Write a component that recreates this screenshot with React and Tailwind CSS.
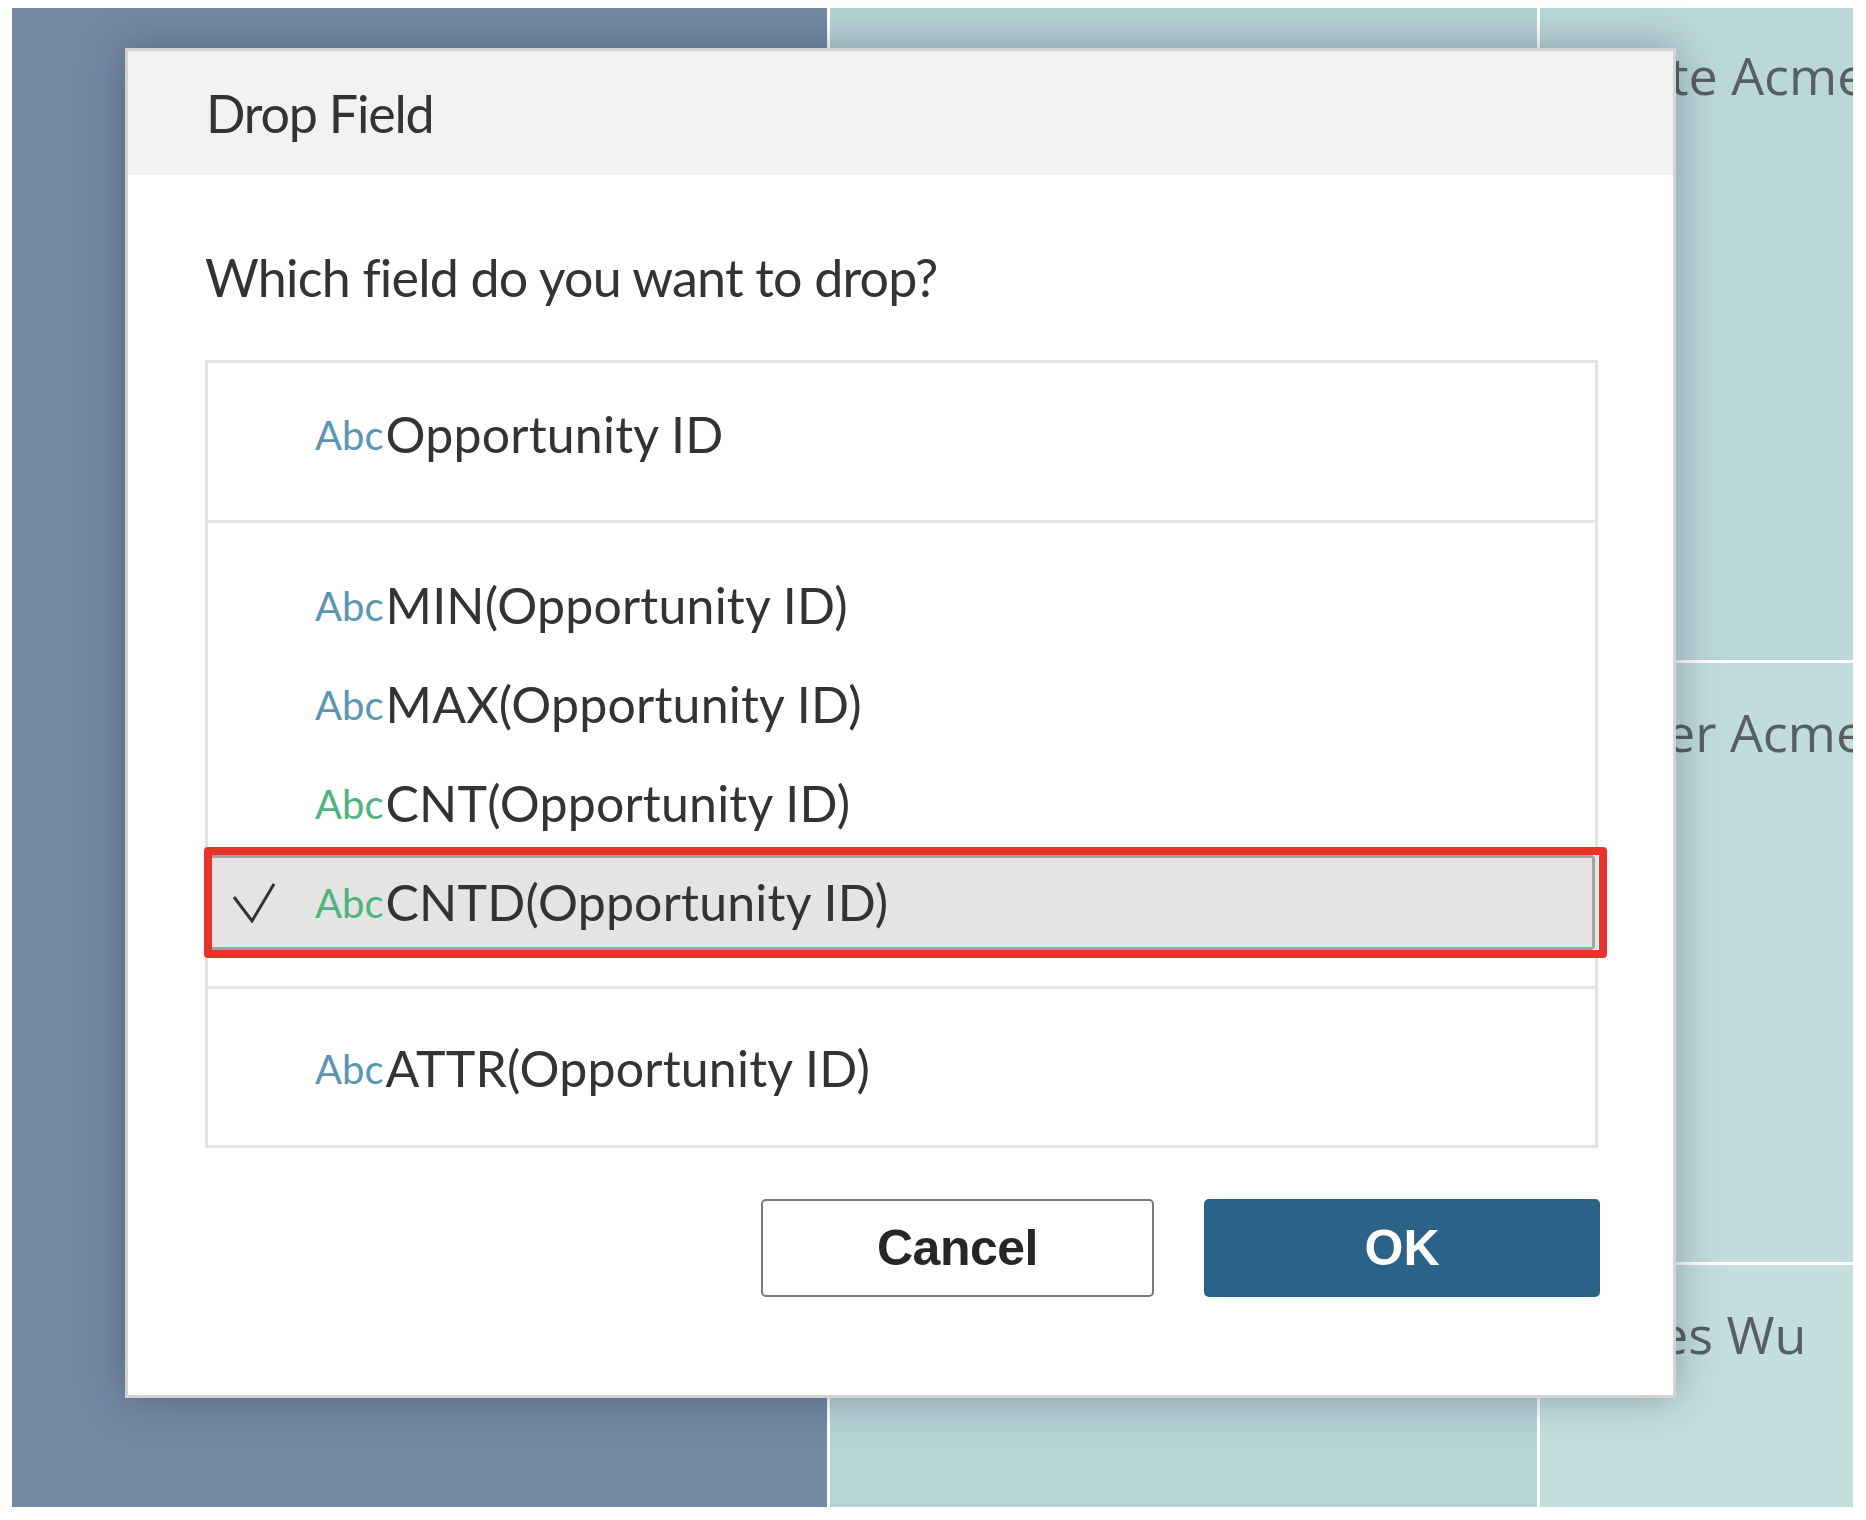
import React from "react";

const lato = { fontFamily: "Lato, 'Open Sans', sans-serif" };

function Check() {
  return (
    <svg width="42" height="40" viewBox="0 0 42 40" className="block">
      <path d="M1 14 L19 38 L41 1" fill="none" stroke="#333" strokeWidth="3" strokeLinejoin="miter" />
    </svg>
  );
}

function Row({ abcColor, label, selected }) {
  return (
    <div
      className={
        "relative flex h-[95px] items-center " +
        (selected ? "rounded-r-[4px] border-y-[3px] border-r-[3px] border-[#a3a3a3] bg-[#e4e4e4]" : "")
      }
    >
      <div className="flex w-[107px] shrink-0 items-center pl-[25px]">{selected ? <Check /> : null}</div>
      <div className="whitespace-nowrap text-[50px] leading-[95px] tracking-[0.2px] text-[#333] [font-variant-ligatures:none]">
        <span className={"align-[3px] text-[40px] tracking-normal " + abcColor}>Abc</span>
        <span className="ml-[2px]">{label}</span>
      </div>
      {selected ? (
        <div className="pointer-events-none absolute -bottom-[11px] -left-[4px] -right-[15px] -top-[11px] rounded-[4px] border-[8px] border-[#e8332a]" />
      ) : null}
    </div>
  );
}

export default function App() {
  const blue = "text-[#5a96b1]";
  const green = "text-[#4db37f]";
  return (
    <div className="relative h-[1520px] w-[1866px] overflow-hidden bg-white" style={lato}>
      {/* background treemap */}
      <div className="flex h-[1520px] pl-[12px] pt-[8px]">
        <div className="flex h-[1499px] w-[1841px] gap-[3px] bg-white">
          <div className="h-full w-[815px] bg-[#7489a3]" />
          <div className="h-full w-[707px] bg-[#b6d3d6]" />
          <div className="flex h-full w-[313px] flex-col gap-[3px] overflow-hidden" style={{ fontFamily: "'Open Sans', sans-serif" }}>
            <div className="h-[652px] overflow-hidden whitespace-nowrap bg-[#bad7d9] pl-[130px] pt-[41px] text-[52px] leading-none text-[#585e61]">
              te Acme
            </div>
            <div className="h-[599px] overflow-hidden whitespace-nowrap bg-[#c1dcdc] pl-[126px] pt-[43px] text-[52px] leading-none text-[#585e61]">
              er Acme
            </div>
            <div className="flex-1 overflow-hidden whitespace-nowrap bg-[#c4dedd] pl-[119px] pt-[43px] text-[52px] leading-none text-[#585e61]">
              es Wu
            </div>
          </div>
        </div>
      </div>

      {/* dialog */}
      <div className="absolute left-[125px] top-[48px] flex h-[1350px] w-[1551px] flex-col border-[3px] border-[#d3d3d3] bg-white shadow-[0_0_40px_rgba(30,40,60,0.35)] [font-variant-ligatures:none]">
        <div className="h-[124px] shrink-0 bg-[#f2f2f2] pl-[78px] text-[52px] leading-[124px] tracking-[-1.2px] text-[#333]">Drop Field</div>
        <div className="flex flex-col pl-[77px] pr-[73px] pt-[76px]">
          <div className="text-[52px] leading-[52px] tracking-[-0.8px] text-[#333]">Which field do you want to drop?</div>
          <div className="mr-[2px] mt-[57px] flex flex-col border-[3px] border-[#e3e3e3]">
            <div className="border-b-[3px] border-[#e6e6e6] pb-[38px] pt-[24px]">
              <Row abcColor={blue} label="Opportunity ID" />
            </div>
            <div className="flex flex-col gap-[4px] border-b-[3px] border-[#e6e6e6] pb-[36px] pt-[35px]">
              <Row abcColor={blue} label="MIN(Opportunity ID)" />
              <Row abcColor={blue} label="MAX(Opportunity ID)" />
              <Row abcColor={green} label="CNT(Opportunity ID)" />
              <Row abcColor={green} label="CNTD(Opportunity ID)" selected />
            </div>
            <div className="pb-[29px] pt-[32px]">
              <Row abcColor={blue} label="ATTR(Opportunity ID)" />
            </div>
          </div>
          <div className="mt-[51px] flex justify-end gap-[50px]" style={{ fontFamily: "'Liberation Sans', Arial, sans-serif" }}>
            <button className="h-[98px] w-[393px] rounded-[5px] border-2 border-[#7a7a7a] bg-white text-[50px] font-bold tracking-[-0.5px] text-[#262626]">
              Cancel
            </button>
            <button className="h-[98px] w-[396px] rounded-[5px] bg-[#2b6287] text-[50px] font-bold text-white">OK</button>
          </div>
        </div>
      </div>
    </div>
  );
}
